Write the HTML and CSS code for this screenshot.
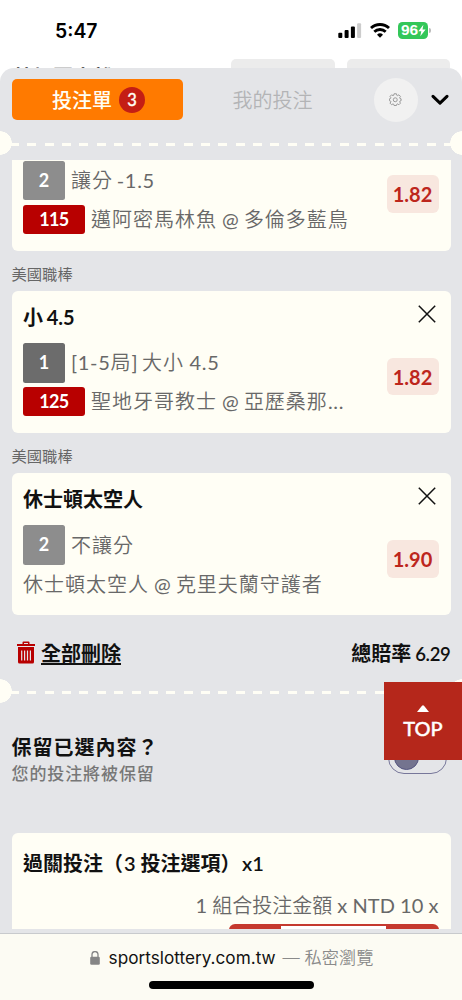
FILE: index.html
```html
<!DOCTYPE html>
<html lang="zh-Hant">
<head>
<meta charset="utf-8">
<meta name="viewport" content="width=device-width">
<title>投注單</title>
<link rel="stylesheet" href="styles.css">
</head>
<body>
<div class="phone">
  <div class="status">
    <span class="time">5:47</span>
    <div class="status-icons">
      <svg class="signal" width="24" height="16" viewBox="0 0 24 16"><rect x="0.3" y="9.8" width="4" height="5.2" rx="1"/><rect x="6.6" y="7" width="4" height="8" rx="1"/><rect x="12.9" y="3.4" width="4" height="11.6" rx="1"/><rect x="19.1" y="0.2" width="4" height="14.8" rx="1" fill="#ccc"/></svg>
      <svg class="wifi" width="20" height="15" viewBox="0 0 20 15" fill="none" stroke="#000" stroke-width="2.8"><path d="M1 5.1a13 13 0 0 1 18 0"/><path d="M4.3 8.8a8.2 8.2 0 0 1 11.4 0"/><path d="M10 14.8l-3-3.1a4.3 4.3 0 0 1 6 0z" fill="#000" stroke="none"/></svg>
      <span class="battery">96<svg width="8" height="13" viewBox="0 0 8 13"><path d="M5.4.7L.4 7.2h2.9L2.3 12.2 7.6 5.6H4.5z" fill="#fff"/></svg></span><i class="battery-cap"></i>
    </div>
  </div>
  <div class="behind"><span class="behind-title">特加因去雜</span><i></i><i></i></div>
  <main class="sheet">
    <header class="tabs">
      <div class="tab-on">投注單<b class="count">3</b></div>
      <div class="tab-off">我的投注</div>
      <div class="gear"><svg width="12.500" height="12.500" viewBox="0 0 24 24" fill="none" stroke="#999" stroke-width="1.900" stroke-linejoin="round"><path d="M9.700 1.500h4.600l.7 3 1.300.6 2.700-1.600 3 3-1.600 2.700.6 1.300 2.200.7v3.600l-2.200.7-.6 1.300 1.600 2.700-3 3-2.700-1.600-1.300.6-.7 2.500H9.700l-.7-2.500-1.300-.6L5 22.500l-3-3 1.600-2.700-.6-1.300-2.200-.7v-3.600l2.200-.7.6-1.300L2 6.500l3-3 2.700 1.600L9 4.500z"/><circle cx="12" cy="13" r="3.800"/></svg></div>
      <svg class="chev" width="18" height="12" viewBox="0 0 18 12"><path d="M2 2.300l7 6.800 7-6.800" fill="none" stroke="#000" stroke-width="3" stroke-linecap="round" stroke-linejoin="round"/></svg>
    </header>
    <div class="perf"></div>
    <section class="card first">
      <div class="info"><div class="line"><b class="pick">2</b><span class="txt">讓分<span class="lat"> -1.5</span></span></div>
      <div class="line match"><b class="code">115</b><span class="txt">邁阿密馬林魚<span class="at"> @ </span>多倫多藍鳥</span></div></div>
      <b class="odds">1.82</b>
    </section>
    <div class="league">美國職棒</div>
    <section class="card">
      <div class="info"><h3>小 4.5</h3><div class="line"><b class="pick dark">1</b><span class="txt"><span class="lat">[1-5</span>局<span class="lat">] </span>大小<span class="lat far"> 4.5</span></span></div>
      <div class="line match"><b class="code">125</b><span class="txt">聖地牙哥教士<span class="at"> @ </span>亞歷桑那<span class="lat">...</span></span></div></div>
      <div class="side"><svg width="18" height="18" viewBox="0 0 18 18"><path d="M.8.8l16.400 16.400M17.200.8L.8 17.200" stroke="#111" stroke-width="1.500"/></svg><b class="odds">1.82</b></div>
    </section>
    <div class="league">美國職棒</div>
    <section class="card">
      <div class="info"><h3>休士頓太空人</h3><div class="line"><b class="pick">2</b><span class="txt">不讓分</span></div>
      <div class="line match"><span class="txt">休士頓太空人<span class="at"> @ </span>克里夫蘭守護者</span></div></div>
      <div class="side"><svg width="18" height="18" viewBox="0 0 18 18"><path d="M.8.8l16.400 16.400M17.200.8L.8 17.200" stroke="#111" stroke-width="1.500"/></svg><b class="odds">1.90</b></div>
    </section>
    <div class="summary">
      <div class="clear"><svg width="18" height="23" viewBox="0 0 18 23"><path d="M0 3h5.500V1.500Q5.500.5 6.500.5h5q1 0 1 1V3H18v2H0zM7 3h4V2H7z" fill="#b80000"/><path d="M1 6h16v15q0 1.500-1.500 1.500h-13Q1 22.500 1 21z" fill="#b80000"/><path d="M4.700 9.500v10M7.600 9.500v10M10.500 9.500v10M13.400 9.500v10" stroke="#e4e5e8" stroke-width="1.200"/></svg><span>全部刪除</span></div>
      <div class="total">總賠率<span class="num"> 6.29</span></div>
    </div>
    <div class="perf"></div>
    <div class="keep"><div class="keep-copy"><h4>保留已選內容？</h4><p>您的投注將被保留</p></div><div class="toggle"><i></i></div></div>
    <section class="parlay">
      <h3>過關投注（<span class="three">3 </span>投注選項）<span class="times">x1</span></h3>
      <p><span class="plain">1 </span>組合投注金額<span class="plain"> x NTD 10 x</span></p>
      <div class="stepper"><i></i></div>
    </section>
    <div class="top"><svg width="12" height="7" viewBox="0 0 12 7"><path d="M0 7L5 .8q1-1 2 0L12 7z" fill="#fff"/></svg><span>TOP</span></div>
  </main>
  <footer class="browser">
    <div class="address"><svg width="10" height="14" viewBox="0 0 10 14"><rect x=".2" y="5.700" width="9.600" height="8" rx="1.300" fill="#858585"/><path d="M2 6V3.600a3 3 0 0 1 6 0V6" fill="none" stroke="#858585" stroke-width="1.300"/></svg><span class="host">sportslottery.com.tw</span><span class="private">— 私密瀏覽</span></div>
    <div class="home"></div>
  </footer>
</div>
</body>
</html>
```
FILE: styles.css
```css
* { box-sizing: border-box; }
body { margin: 0; }
h3, h4, p { margin: 0; }
svg { display: block; flex: none; }
.phone { position: relative; width: 462px; height: 1000px; overflow: hidden; display: flex; flex-direction: column; background: linear-gradient(#fff 0 900px, #e4e5e8 900px); font-family: Lato, "Noto Sans CJK TC", sans-serif; color: #111; }
.status { height: 59px; flex: none; display: flex; justify-content: space-between; padding: 19px 31px 0 55px; }
.time { font: 600 19.400px/24px Inter, sans-serif; color: #000; }
.status-icons { display: flex; align-items: flex-start; padding-top: 4px; }
.wifi { margin-left: 8px; }
.battery { display: flex; align-items: center; width: 30px; height: 16.500px; margin: -1px 0 0 8px; padding-left: 3px; border-radius: 4.500px; background: #34c759; color: #fff; font: 700 15.500px/16px "Liberation Sans", sans-serif; }
.battery-cap { width: 2px; height: 5px; margin: 5px 0 0 1px; border-radius: 0 2px 2px 0; background: #bbb; }
.behind { height: 9px; flex: none; display: flex; gap: 12px; overflow: hidden; }
.behind-title { width: 219px; padding-left: 13px; margin-top: 6px; font-size: 20px; line-height: 24px; font-weight: 700; color: #333; }
.behind i { width: 104px; height: 20px; border-radius: 5px; background: #ececec; }
.behind i + i { width: 103px; }
.sheet { position: relative; height: 861px; flex: none; overflow: hidden; border-radius: 14px 14px 0 0; background: #e4e5e8; }
.tabs { height: 63px; display: flex; align-items: center; padding: 0 13px 0 11.500px; }
.tab-on { width: 171px; height: 40.500px; display: flex; align-items: center; justify-content: center; gap: 7px; border-radius: 5px; background: #ff7a00; color: #fffef5; font-size: 20px; font-weight: 500; padding-left: 3px; }
.count { width: 26px; height: 26px; border-radius: 50%; background: #c41e14; font-size: 16.500px; line-height: 26px; text-align: center; font-weight: 500; -webkit-text-stroke: .3px #fffef5; }
.tab-off { width: 191px; padding-left: 50px; font-size: 20px; font-weight: 350; color: #b3b4b6; }
.gear { width: 44px; height: 44px; display: grid; place-items: center; border-radius: 50%; background: #f1f1f1; }
.chev { margin-left: 13px; }
.perf { height: 24px; background: radial-gradient(circle at 0 12px, #fffef5 11.500px, transparent 12px), radial-gradient(circle at 462px 12px, #fffef5 11.500px, transparent 12px), repeating-linear-gradient(90deg, #fffef5 0 9px, transparent 9px 17.360px) 10px 12px / 442px 3px no-repeat; }
.card { height: 142px; margin: 0 11.500px; padding: 0 12px 0 11.400px; display: flex; justify-content: space-between; background: #fffef5; border-radius: 6px; }
.card.first { height: 90.500px; margin-top: 5px; border-radius: 0 0 6px 6px; }
.card h3 { height: 52px; padding-top: 14px; font-size: 20px; line-height: 24px; font-weight: 700; color: #111; word-spacing: -1px; }
.info { flex: 1; min-width: 0; white-space: nowrap; }
.line { height: 40px; display: flex; align-items: center; gap: 6px; font-size: 20px; line-height: 24px; font-weight: 350; color: #686868; letter-spacing: 1px; }
.first .line { padding-top: 1px; }
.line:not(.match) .txt { margin-top: -1px; }
.first .line:not(.match) .txt { margin-top: -2px; }
.lat { font-weight: 400; letter-spacing: .7px; word-spacing: -2px; }
.far { word-spacing: -.5px; }
.at { font-weight: 400; letter-spacing: 0; word-spacing: 0; }
.match { height: 37px; }
.pick { width: 42px; height: 39.500px; line-height: 39.500px; text-align: center; background: #8d8d8d; color: #fff; border-radius: 2.500px; font-size: 18px; letter-spacing: 0; }
.pick.dark { background: #6c6c6c; }
.code { width: 62px; height: 29px; line-height: 29px; text-align: center; background: #b80000; color: #fff; border-radius: 3px; font-size: 18px; letter-spacing: -.6px; }
.odds { width: 52px; height: 37.500px; line-height: 38px; text-align: center; background: #f8e7df; color: #bd261c; border-radius: 6px; font-size: 20px; }
.first .odds { margin-top: 15px; }
.side { display: flex; flex-direction: column; align-items: flex-end; padding-top: 14px; }
.side svg { margin-right: 3px; }
.side .odds { margin-top: 35px; }
.league { height: 40.300px; padding: 13px 11.500px 0; font-size: 15.300px; line-height: 20px; font-weight: 400; color: #666; }
.summary { height: 64px; display: flex; justify-content: space-between; padding: 25px 11.500px 0 17px; font-size: 20px; line-height: 27px; font-weight: 600; color: #111; }
.clear { display: flex; gap: 6px; }
.clear svg { margin-top: 1px; }
.clear span { text-decoration: underline; text-decoration-thickness: 1.500px; text-underline-offset: 2px; }
.num { font-size: 18.500px; word-spacing: -.5px; letter-spacing: -.3px; }
.keep { height: 130px; padding: 31px 15px 0 11.500px; display: flex; justify-content: space-between; }
.keep h4 { height: 27px; font-size: 20px; line-height: 27px; font-weight: 600; letter-spacing: 1px; }
.keep p { font-size: 17px; line-height: 26px; font-weight: 500; letter-spacing: .9px; color: #777; }
.toggle { width: 59px; height: 32px; margin-top: 8px; border: 1.500px solid #77779a; border-radius: 16px; padding: 2px 5px; }
.toggle i { display: block; width: 25px; height: 25px; border-radius: 50%; background: #74748f; border: 1.500px solid #555580; }
.parlay { height: 110px; margin: 0 11.500px; padding: 17px 12px 0 11.400px; background: #fffef5; border-radius: 6px 6px 0 0; }
.parlay h3 { font-size: 20px; line-height: 26px; font-weight: 600; white-space: nowrap; }
.three { margin-left: 1px; }
.times { margin-left: 1.500px; }
.parlay p { margin-top: 16px; font-size: 20px; line-height: 26px; font-weight: 350; color: #686868; text-align: right; white-space: nowrap; }
.plain { font-weight: 400; letter-spacing: .1px; word-spacing: -.2px; }
.stepper { width: 210px; height: 40px; margin: 6px 0 0 auto; border-radius: 6px; background: #c5392e; padding: 2px 53px 0 52px; }
.stepper i { display: block; height: 36px; background: #fff; }
.top { position: absolute; top: 614px; right: 0; width: 78px; height: 78px; display: flex; flex-direction: column; align-items: center; padding-top: 23px; background: #b5271b; color: #fff; font-size: 20px; line-height: 24px; font-weight: 500; }
.top span { margin-top: 4px; -webkit-text-stroke: .4px #fff; }
.browser { height: 67px; margin-top: 4px; border-top: 1px solid #c8cacd; background: #fcfbf3; }
.address { height: 47px; display: flex; align-items: center; justify-content: center; font: 17.200px/24px Inter, "Noto Sans CJK TC", sans-serif; color: #111; }
.host { margin-left: 9px; }
.private { margin-left: 7px; color: #8a8a8a; font-weight: 350; }
.address svg { margin-left: 1px; }
.home { width: 165px; height: 7.500px; margin: 0 auto; border-radius: 4px; background: #000; }
```
